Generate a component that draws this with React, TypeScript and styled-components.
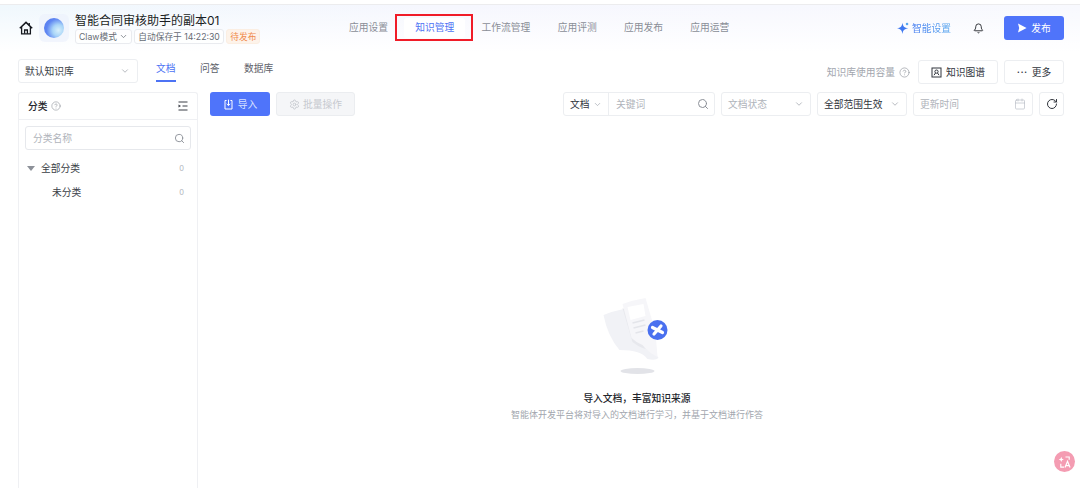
import * as React from 'react';
import styled, {createGlobalStyle} from 'styled-components';
import {Bell, Calendar, ChevronDown, CircleHelp, RotateCw, Search, Settings} from 'lucide-react';

const FONT = `Inter, "Noto Sans CJK SC", sans-serif`;

const NAV_ITEMS = ['应用设置', '知识管理', '工作流管理', '应用评测', '应用发布', '应用运营'];
const TABS = ['文档', '问答', '数据库'];

const HomeIcon = () => (
    <svg width="14" height="14" viewBox="0 0 14 14" fill="none" stroke="#15181e" strokeWidth="1.3">
        <path d="M0.8 7.2 L7 1.4 L13.2 7.2" strokeWidth="1.5" />
        <path d="M10.2 2 V4.4" strokeWidth="1.4" />
        <path d="M2.6 6 V12.8 H11.4 V6" />
        <path d="M5.6 12.8 V9 H8.4 V12.8" />
    </svg>
);

const GraphIcon = () => (
    <svg width="11" height="11" viewBox="0 0 11 11" fill="none" stroke="#30343c" strokeWidth="1">
        <rect x="1" y="1" width="9" height="9" />
        <circle cx="5.5" cy="4.6" r="1.6" />
        <path d="M3 8.2 L4.5 6 M8 8.2 L6.5 6" />
    </svg>
);

const ImportIcon = () => (
    <svg width="11" height="11" viewBox="0 0 11 11" fill="none" stroke="#fff" strokeWidth="1">
        <path d="M3.6 1.5 H2 V10 H9 V1.5 H7.4" />
        <path d="M5.5 0.6 V6.4 M3.7 4.8 L5.5 6.6 L7.3 4.8" />
    </svg>
);

const CollapseIcon = () => (
    <svg width="10" height="10" viewBox="0 0 10 10">
        <path d="M0.5 1 H9.5 M4.5 5 H9.5 M0.5 9 H9.5" stroke="#3a3e46" strokeWidth="1" />
        <path d="M0.5 3.4 L3 5 L0.5 6.6 Z" fill="#3a3e46" />
    </svg>
);

const SparkIcon = () => (
    <svg width="12" height="12" viewBox="0 0 11 11">
        <path d="M5 0.6 C5.5 4 6.5 5 10.4 5.8 C6.5 6.6 5.5 7.6 5 11 C4.5 7.6 3.5 6.6 0 5.8 C3.5 5 4.5 4 5 0.6 Z" fill="#3f78f0" />
        <circle cx="9.2" cy="1.8" r="1.2" fill="#58a8ee" />
    </svg>
);

const SendIcon = () => (
    <svg width="10" height="10" viewBox="0 0 10 10">
        <path d="M1 0.6 L9.6 5 L1 9.4 L2.2 5 Z" fill="#fff" />
    </svg>
);

const EmptyArt = () => (
    <svg width="80" height="90" viewBox="1.5 0 80 90">
        <path d="M8 25 Q18 21 28 19 L46 40 L63 68 Q60 71 52 69 Q46 60 24 60 Q12 46 8 25 Z" fill="#f1f2f6" />
        <path d="M27 18 L37 52 Q47 60 57 60 L48 30 Z" fill="#e7e8ed" />
        <path d="M27 14 Q38 10 50 8 L60 42 L62 67 Q52 62 47 55 Q40 52 36 48 Z" fill="#f6f6f9" />
        <path d="M32 17 L48 14 L50 26 L35 30 Z" fill="#fff" />
        <path d="M37 33 L49 30 M38 38 L50 35 M40 43 L48 41" stroke="#e4e5ea" strokeWidth="1.3" />
        <circle cx="62" cy="40" r="10" fill="#4a70ef" />
        <path d="M57 37.5 L67 42.5 M65.5 36 L58.5 44" stroke="#fff" strokeWidth="3.2" strokeLinecap="round" />
        <ellipse cx="42" cy="81" rx="17" ry="3" fill="#e2e3e8" />
    </svg>
);

const App = () => (
    <Shell>
        <GlobalStyle />
        <TopLine />
        <Header>
            <HeaderLeft>
                <HomeButton>
                    <HomeIcon />
                </HomeButton>
                <LogoTile>
                    <LogoBall />
                </LogoTile>
                <TitleBlock>
                    <Title>智能合同审核助手的副本01</Title>
                    <TagRow>
                        <Tag>
                            Claw模式
                            <ChevronDown size={9} color="#6a6f78" />
                        </Tag>
                        <Tag>自动保存于 14:22:30</Tag>
                        <StatusTag>待发布</StatusTag>
                    </TagRow>
                </TitleBlock>
            </HeaderLeft>
            <Nav>
                {NAV_ITEMS.map((it) => (
                    <NavItem key={it} active={it === '知识管理'}>
                        {it}
                    </NavItem>
                ))}
            </Nav>
            <HeaderRight>
                <SmartLink>
                    <SparkIcon />
                    <SmartText>智能设置</SmartText>
                </SmartLink>
                <Bell size={11} color="#23262c" />
                <PublishButton>
                    <SendIcon />
                    发布
                </PublishButton>
            </HeaderRight>
        </Header>
        <Toolbar>
            <BaseSelect>
                默认知识库
                <ChevronDown size={10} color="#a9adb5" />
            </BaseSelect>
            <Tabs>
                {TABS.map((it) => (
                    <TabItem key={it} active={it === '文档'}>
                        {it}
                    </TabItem>
                ))}
            </Tabs>
            <ToolbarRight>
                <Capacity>
                    知识库使用容量
                    <CircleHelp size={11} color="#8f939b" strokeWidth={1.4} />
                </Capacity>
                <OutlineButton wide>
                    <GraphIcon />
                    知识图谱
                </OutlineButton>
                <OutlineButton>
                    <Dots>···</Dots>
                    更多
                </OutlineButton>
            </ToolbarRight>
        </Toolbar>
        <Body>
            <Sidebar>
                <SidebarHead>
                    <SidebarTitle>
                        分类
                        <CircleHelp size={10} color="#83878f" strokeWidth={1.3} />
                    </SidebarTitle>
                    <CollapseIcon />
                </SidebarHead>
                <SidebarBody>
                    <SearchBox>
                        <Placeholder>分类名称</Placeholder>
                        <Search size={11} color="#8b8f97" />
                    </SearchBox>
                    <TreeList>
                        <TreeRow>
                            <TreeLabel>
                                <Caret />
                                全部分类
                            </TreeLabel>
                            <Count>0</Count>
                        </TreeRow>
                        <TreeRow>
                            <TreeLabel indent>未分类</TreeLabel>
                            <Count>0</Count>
                        </TreeRow>
                    </TreeList>
                </SidebarBody>
            </Sidebar>
            <Main>
                <ActionBar>
                    <ImportButton>
                        <ImportIcon />
                        导入
                    </ImportButton>
                    <BatchButton>
                        <Settings size={11} color="#c6c9cf" />
                        批量操作
                    </BatchButton>
                    <Filters>
                        <SearchGroup>
                            <TypePicker>
                                文档
                                <ChevronDown size={9} color="#a9adb5" />
                            </TypePicker>
                            <KeywordField>
                                <Placeholder>关键词</Placeholder>
                                <Search size={12} color="#8b8f97" />
                            </KeywordField>
                        </SearchGroup>
                        <FilterBox width={90}>
                            <Placeholder>文档状态</Placeholder>
                            <ChevronDown size={10} color="#a9adb5" />
                        </FilterBox>
                        <FilterBox width={90}>
                            全部范围生效
                            <ChevronDown size={10} color="#a9adb5" />
                        </FilterBox>
                        <FilterBox width={120}>
                            <Placeholder>更新时间</Placeholder>
                            <Calendar size={12} color="#b5b9c2" strokeWidth={1.3} />
                        </FilterBox>
                        <RefreshButton>
                            <RotateCw size={12} color="#30343c" />
                        </RefreshButton>
                    </Filters>
                </ActionBar>
                <EmptyState>
                    <EmptyArt />
                    <EmptyTitle>导入文档，丰富知识来源</EmptyTitle>
                    <EmptyText>智能体开发平台将对导入的文档进行学习，并基于文档进行作答</EmptyText>
                </EmptyState>
            </Main>
        </Body>
        <TranslateBubble>
            <svg width="14" height="14" viewBox="0 0 15 15" fill="none" stroke="#fff" strokeWidth="1.2">
                <path d="M3.5 2 L4.3 4 L6.3 4.8 L4.3 5.6 L3.5 7.6 L2.7 5.6 L0.7 4.8 L2.7 4 Z" fill="#fff" stroke="none" />
                <path d="M8 2.2 H12 V5 M3 9.5 V13 H6.5" />
                <path d="M7.5 13.5 L10.2 6.8 L12.9 13.5 M8.6 11.3 H11.8" strokeWidth="1.3" />
            </svg>
        </TranslateBubble>
    </Shell>
);

const GlobalStyle = createGlobalStyle`
    html, body {
        margin: 0;
        padding: 0;
        background: #fff;
        overflow: hidden;
    }

    * {
        box-sizing: border-box;
    }
`;

const Shell = styled.div`
    width: 1080px;
    height: 488px;
    position: relative;
    overflow: hidden;
    display: flex;
    flex-direction: column;
    font-family: ${FONT};
    font-size: 9.75px;
    color: #23262c;
    background:
        linear-gradient(180deg, rgba(255, 255, 255, 0) 0%, #fff 100%) 0 0 / 100% 52px no-repeat,
        linear-gradient(100deg, #eef7fd 0%, #f5f6fe 40%, #f7f8fe 100%) 0 0 / 100% 52px no-repeat;
`;

const TopLine = styled.div`
    height: 5px;
    flex-shrink: 0;
    background: #fff;
    border-bottom: 1px solid #ececee;
`;

const Header = styled.header`
    height: 46px;
    flex-shrink: 0;
    display: flex;
    align-items: center;
    padding: 0 16px 0 19px;
`;

const HeaderLeft = styled.div`
    width: 319px;
    display: flex;
    align-items: center;
`;

const HomeButton = styled.span`
    width: 14px;
    height: 14px;
    margin-right: 6px;
    display: flex;
`;

const LogoTile = styled.div`
    width: 30px;
    height: 28px;
    margin-right: 6px;
    border-radius: 6px;
    background: rgba(235, 240, 252, 0.6);
    display: flex;
    align-items: center;
    justify-content: center;
`;

const LogoBall = styled.div`
    width: 20px;
    height: 20px;
    border-radius: 50%;
    background: radial-gradient(circle at 72% 62%, #d8f0fb 0%, #a9d5f8 30%, #5f86f2 62%, #4f76ee 100%);
`;

const TitleBlock = styled.div`
    display: flex;
    flex-direction: column;
    gap: 1px;
`;

const Title = styled.div`
    font-size: 12px;
    line-height: 15px;
    color: #1b1e24;
    white-space: nowrap;
`;

const TagRow = styled.div`
    display: flex;
    gap: 2.5px;
`;

const Tag = styled.span`
    height: 15px;
    padding: 0 3px;
    display: flex;
    align-items: center;
    gap: 2px;
    font-size: 8.7px;
    color: #666b74;
    white-space: nowrap;
    background: rgba(255, 255, 255, 0.75);
    border: 1px solid #e9ebef;
    border-radius: 3px;
`;

const StatusTag = styled(Tag)`
    color: #f08a4b;
    background: #fdf3ea;
    border-color: #fbeee2;
`;

const Nav = styled.nav`
    display: flex;
    gap: 5.3px;
`;

const NavItem = styled.span<{active?: boolean}>`
    position: relative;
    padding: 0 11px;
    line-height: 20px;
    white-space: nowrap;
    border-radius: 3px;
    color: ${({active}) => (active ? '#4d73f4' : '#8a8e97')};
    background: ${({active}) => (active ? '#fff' : 'transparent')};

    &::after {
        content: '';
        display: ${({active}) => (active ? 'block' : 'none')};
        position: absolute;
        left: -9px;
        right: -8px;
        top: -4px;
        bottom: -3px;
        border: 2px solid #f01c28;
    }
`;

const HeaderRight = styled.div`
    margin-left: auto;
    display: flex;
    align-items: center;
`;

const SmartLink = styled.span`
    display: flex;
    align-items: center;
    gap: 3px;
    margin-right: 22px;
`;

const SmartText = styled.span`
    background: linear-gradient(90deg, #3f78f0, #58a8ee);
    -webkit-background-clip: text;
    background-clip: text;
    color: transparent;
`;

const PublishButton = styled.button`
    width: 60px;
    height: 24px;
    margin-left: 20px;
    padding: 0;
    border: none;
    border-radius: 3px;
    background: #4f74fa;
    color: #fff;
    font: inherit;
    display: flex;
    align-items: center;
    justify-content: center;
    gap: 4px;
`;

const Toolbar = styled.div`
    height: 25px;
    margin-top: 8px;
    flex-shrink: 0;
    padding: 0 16px 0 18px;
    display: flex;
    align-items: flex-start;
`;

const BaseSelect = styled.div`
    width: 120px;
    height: 24px;
    padding: 0 7px 0 6px;
    display: flex;
    align-items: center;
    justify-content: space-between;
    border: 1px solid #eceef1;
    border-radius: 3px;
    background: #fff;
    color: #3a3e46;
`;

const Tabs = styled.div`
    display: flex;
    gap: 24.5px;
    margin-left: 18px;
`;

const TabItem = styled.span<{active?: boolean}>`
    height: 23px;
    line-height: 20px;
    color: ${({active}) => (active ? '#4d73f4' : '#5c6069')};
    border-bottom: 2px solid ${({active}) => (active ? '#4d73f4' : 'transparent')};
`;

const ToolbarRight = styled.div`
    margin-left: auto;
    display: flex;
    align-items: center;
    gap: 6px;
    margin-top: 1px;
`;

const Capacity = styled.span`
    display: flex;
    align-items: center;
    gap: 4px;
    margin-right: 2px;
    color: #a2a6ae;
`;

const OutlineButton = styled.span<{wide?: boolean}>`
    width: ${({wide}) => (wide ? '80px' : '60px')};
    height: 24px;
    display: flex;
    align-items: center;
    justify-content: center;
    gap: 4px;
    border: 1px solid #eceef1;
    border-radius: 3px;
    background: #fff;
    color: #30343c;
`;

const Dots = styled.span`
    font-size: 11px;
    line-height: 1;
    letter-spacing: 0.5px;
`;

const Body = styled.div`
    flex: 1;
    min-height: 0;
    margin-top: 8px;
    padding: 0 16px 0 18px;
    display: flex;
    gap: 12px;
`;

const Sidebar = styled.aside`
    width: 180px;
    flex-shrink: 0;
    border: 1px solid #eff0f3;
    border-bottom: none;
    border-radius: 3px 3px 0 0;
`;

const SidebarHead = styled.div`
    height: 27px;
    padding: 0 9px;
    display: flex;
    align-items: center;
    justify-content: space-between;
    border-bottom: 1px solid #eff0f3;
`;

const SidebarTitle = styled.span`
    display: flex;
    align-items: center;
    gap: 3px;
    font-weight: 500;
    color: #23262c;
`;

const SidebarBody = styled.div`
    padding: 6px 6px 0;
`;

const SearchBox = styled.div`
    height: 24px;
    padding: 0 5px 0 7px;
    display: flex;
    align-items: center;
    justify-content: space-between;
    border: 1px solid #e6e8ec;
    border-radius: 3px;
`;

const Placeholder = styled.span`
    color: #b0b4bb;
`;

const TreeList = styled.div`
    margin-top: 6px;
    display: flex;
    flex-direction: column;
`;

const TreeRow = styled.div`
    height: 24px;
    padding-right: 7px;
    display: flex;
    align-items: center;
    justify-content: space-between;
`;

const TreeLabel = styled.span<{indent?: boolean}>`
    display: flex;
    align-items: center;
    gap: 6px;
    margin-left: ${({indent}) => (indent ? '27px' : '2px')};
    color: #3a3e46;
`;

const Caret = styled.i`
    width: 0;
    height: 0;
    border-left: 4.5px solid transparent;
    border-right: 4.5px solid transparent;
    border-top: 5px solid #8d9199;
`;

const Count = styled.span`
    font-size: 7.5px;
    color: #b0b4bb;
`;

const Main = styled.main`
    flex: 1;
    min-width: 0;
    display: flex;
    flex-direction: column;
`;

const ActionBar = styled.div`
    height: 24px;
    display: flex;
    align-items: center;
    gap: 6px;
`;

const ImportButton = styled.span`
    width: 60px;
    height: 24px;
    display: flex;
    align-items: center;
    justify-content: center;
    gap: 4px;
    border-radius: 3px;
    background: #4f74fa;
    color: #d9e2ff;
`;

const BatchButton = styled.span`
    width: 79px;
    height: 24px;
    display: flex;
    align-items: center;
    justify-content: center;
    gap: 3px;
    border: 1px solid #ebedf0;
    border-radius: 3px;
    background: #f5f6f8;
    color: #c6c9cf;
`;

const Filters = styled.div`
    margin-left: auto;
    display: flex;
    gap: 6px;
`;

const SearchGroup = styled.div`
    width: 152px;
    height: 24px;
    display: flex;
    border: 1px solid #eceef1;
    border-radius: 3px;
`;

const TypePicker = styled.span`
    width: 45px;
    padding-left: 6px;
    display: flex;
    align-items: center;
    gap: 3px;
    border-right: 1px solid #eceef1;
    color: #30343c;
`;

const KeywordField = styled.span`
    flex: 1;
    padding: 0 5px 0 7px;
    display: flex;
    align-items: center;
    justify-content: space-between;
`;

const FilterBox = styled.span<{width: number}>`
    width: ${({width}) => width}px;
    height: 24px;
    padding: 0 6px;
    display: flex;
    align-items: center;
    justify-content: space-between;
    border: 1px solid #eceef1;
    border-radius: 3px;
    color: #30343c;
    white-space: nowrap;
`;

const RefreshButton = styled.span`
    width: 25px;
    height: 24px;
    display: flex;
    align-items: center;
    justify-content: center;
    border: 1px solid #eceef1;
    border-radius: 3px;
`;

const EmptyState = styled.div`
    margin-top: 174px;
    display: flex;
    flex-direction: column;
    align-items: center;
`;

const EmptyTitle = styled.div`
    margin-top: 12px;
    line-height: 14px;
    font-weight: 500;
    color: #23262c;
`;

const EmptyText = styled.div`
    margin-top: 2px;
    font-size: 9px;
    line-height: 14px;
    color: #a2a6ae;
    white-space: nowrap;
`;

const TranslateBubble = styled.div`
    position: absolute;
    left: 1054px;
    top: 451px;
    width: 21px;
    height: 21px;
    border-radius: 50%;
    background: #f49cb2;
    display: flex;
    align-items: center;
    justify-content: center;
`;

export default App;
